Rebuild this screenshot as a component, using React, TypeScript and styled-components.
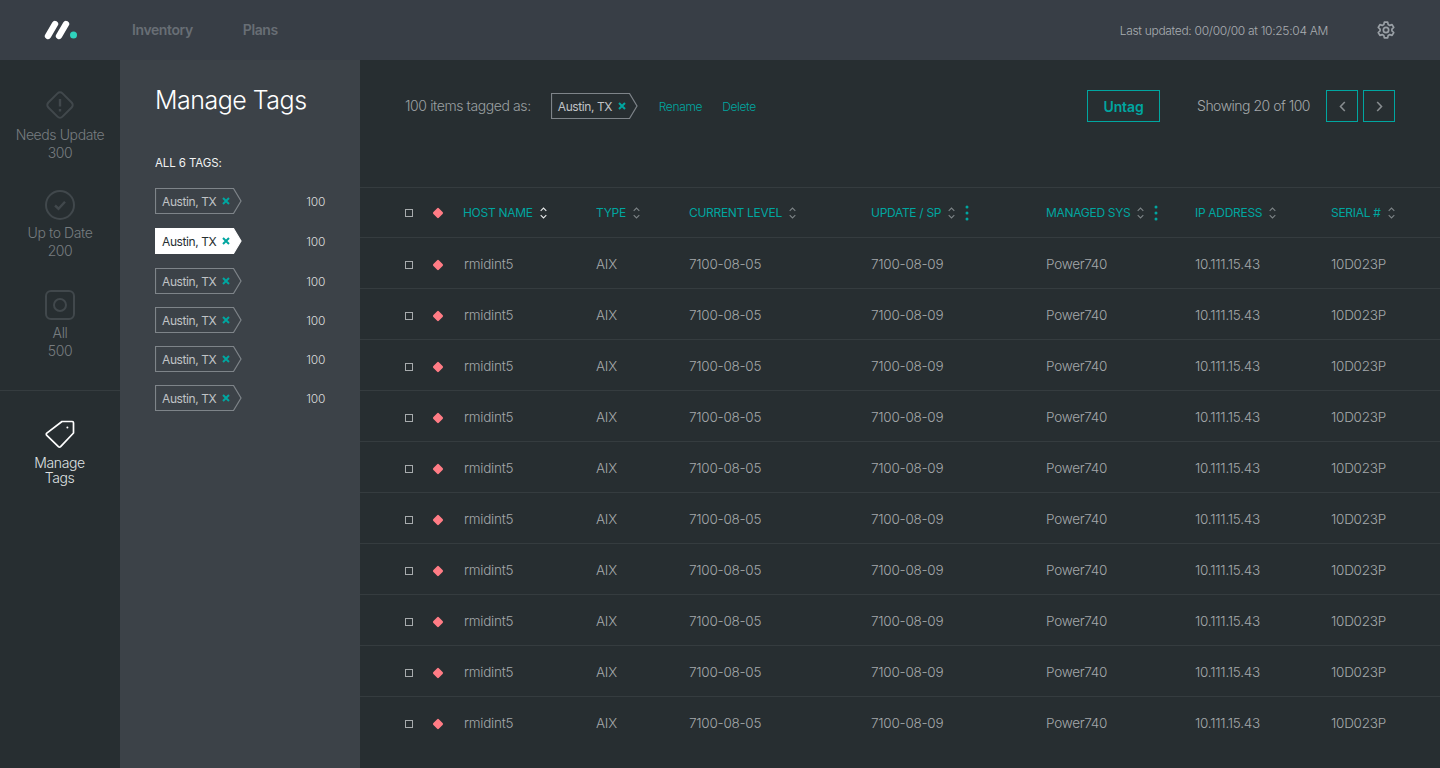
import React from "react";
import styled, { createGlobalStyle } from "styled-components";

const teal = "#00a6a0";

const GlobalStyle = createGlobalStyle`
  html, body {
    margin: 0;
    padding: 0;
    background: #272e31;
  }
  body {
    font-family: Inter, "Liberation Sans", sans-serif;
    font-weight: 300;
    letter-spacing: -0.3px;
    -webkit-font-smoothing: antialiased;
  }
  * {
    box-sizing: border-box;
  }
`;

const columns = [
  { label: "HOST NAME", active: true },
  { label: "TYPE" },
  { label: "CURRENT LEVEL" },
  { label: "UPDATE / SP", more: true },
  { label: "MANAGED SYS", more: true },
  { label: "IP ADDRESS" },
  { label: "SERIAL #" },
];

const tags = [false, true, false, false, false, false];
const rows = Array.from({ length: 10 }, (_, i) => i);

const Logo = () => (
  <svg width="34" height="22" viewBox="0 0 34 22">
    <path d="M4 17 L11 5 M15 17 L22 5" stroke="#fff" strokeWidth="6.4" strokeLinecap="round" fill="none" />
    <circle cx="29.5" cy="16" r="3.5" fill="#2fd3bd" />
  </svg>
);

const Gear = () => (
  <svg width="20" height="20" viewBox="0 0 24 24" fill="none" stroke="#9aa0a6" strokeWidth="2" strokeLinejoin="round">
    <path d="M10 2.5h4l.6 2.9 1.9 1.1 2.8-.9 2 3.4-2.2 2v2l2.2 2-2 3.4-2.8-.9-1.9 1.1-.6 2.9h-4l-.6-2.9-1.9-1.1-2.8.9-2-3.4 2.2-2v-2l-2.2-2 2-3.4 2.8.9 1.9-1.1z" />
    <circle cx="12" cy="12" r="3.2" />
  </svg>
);

const UpdateIcon = () => (
  <svg width="32" height="32" viewBox="0 0 32 32" fill="none" stroke="#41484c" strokeWidth="2">
    <rect x="6" y="6" width="20" height="20" rx="3.5" transform="rotate(45 16 16)" />
    <path d="M16 10v7.5M16 20v2.4" strokeWidth="2.4" />
  </svg>
);

const CheckIcon = () => (
  <svg width="32" height="32" viewBox="0 0 32 32" fill="none" stroke="#41484c" strokeWidth="2">
    <circle cx="16" cy="16" r="14" />
    <path d="M11 16.5l3.5 3.2 6.5-7" strokeWidth="2.4" />
  </svg>
);

const AllIcon = () => (
  <svg width="32" height="32" viewBox="0 0 32 32" fill="none" stroke="#41484c" strokeWidth="2">
    <rect x="2" y="2" width="28" height="28" rx="5" />
    <circle cx="16" cy="16" r="6" />
  </svg>
);

const TagIcon = () => (
  <svg width="32" height="32" viewBox="0 0 32 32" fill="none" stroke="#fff" strokeWidth="1.7" strokeLinejoin="round">
    <path d="M18 2.5h10.2c.8 0 1.3.5 1.3 1.3V14L16.6 27.6c-.7.7-1.5.7-2.2 0L2.8 16.4c-.7-.7-.7-1.5 0-2.2z" />
    <circle cx="23.4" cy="8.4" r="1" fill="#fff" stroke="none" />
  </svg>
);

const Sort = ({ active }: { active?: boolean }) => (
  <svg width="7" height="12" viewBox="0 0 7 12" fill="none" stroke={active ? "#e8eaeb" : "#7c8386"} strokeWidth="1.1">
    <path d="M0.7 3.8 L3.5 1 L6.3 3.8 M0.7 8.2 L3.5 11 L6.3 8.2" />
  </svg>
);

const Dots = () => (
  <svg width="4" height="16" viewBox="0 0 4 16" fill={teal}>
    <circle cx="2" cy="2" r="1.5" />
    <circle cx="2" cy="8" r="1.5" />
    <circle cx="2" cy="14" r="1.5" />
  </svg>
);

const CrossSvg = styled.svg`
  position: relative;
  flex: none;
`;

const Cross = () => (
  <CrossSvg width="8" height="8" viewBox="0 0 8 8" stroke={teal} strokeWidth="2" fill="none">
    <path d="M1 1l6 6M7 1l-6 6" />
  </CrossSvg>
);

const Chevron = ({ left }: { left?: boolean }) => (
  <svg width="7" height="11" viewBox="0 0 7 11" fill="none" stroke="#878c8f" strokeWidth="1.6">
    <path d={left ? "M5.8 1 L1.5 5.5 L5.8 10" : "M1.2 1 L5.5 5.5 L1.2 10"} />
  </svg>
);

const Tag = ({ selected }: { selected?: boolean }) => (
  <TagBox>
    <TagShape viewBox="0 0 87 26" preserveAspectRatio="none">
      <path
        d="M0.5 0.5 H78.5 L86 13 L78.5 25.5 H0.5 Z"
        fill={selected ? "#fff" : "none"}
        stroke={selected ? "#fff" : "#7e8489"}
        strokeWidth="1.2"
      />
    </TagShape>
    <TagText $selected={selected}>Austin, TX</TagText>
    <Cross />
  </TagBox>
);

export default function App() {
  return (
    <Page>
      <GlobalStyle />
      <TopBar>
        <LogoSlot>
          <Logo />
        </LogoSlot>
        <NavLink $first>Inventory</NavLink>
        <NavLink>Plans</NavLink>
        <Updated>Last updated: 00/00/00 at 10:25:04 AM</Updated>
        <GearSlot>
          <Gear />
        </GearSlot>
      </TopBar>
      <Body>
        <Sidebar>
          <SideItem>
            <UpdateIcon />
            <SideLabel $gap={5}>
              Needs Update
              <br />
              300
            </SideLabel>
          </SideItem>
          <SideItem>
            <CheckIcon />
            <SideLabel $gap={3}>
              Up to Date
              <br />
              200
            </SideLabel>
          </SideItem>
          <SideItem>
            <AllIcon />
            <SideLabel $gap={3}>
              All
              <br />
              500
            </SideLabel>
          </SideItem>
          <SideDivider />
          <SideActive>
            <TagIcon />
            <ActiveLabel>
              Manage
              <br />
              Tags
            </ActiveLabel>
          </SideActive>
        </Sidebar>
        <TagPanel>
          <PanelTitle>Manage Tags</PanelTitle>
          <PanelSub>ALL 6 TAGS:</PanelSub>
          <TagList>
            {tags.map((selected, i) => (
              <TagRow key={i} $wide={i < 2}>
                <Tag selected={selected} />
                <TagCount>100</TagCount>
              </TagRow>
            ))}
          </TagList>
        </TagPanel>
        <Main>
          <Toolbar>
            <ToolText>100 items tagged as:</ToolText>
            <Tag />
            <ToolLink>Rename</ToolLink>
            <ToolLink>Delete</ToolLink>
            <UntagButton>Untag</UntagButton>
            <Showing>Showing 20 of 100</Showing>
            <PageButton>
              <Chevron left />
            </PageButton>
            <PageButton>
              <Chevron />
            </PageButton>
          </Toolbar>
          <Table>
            <HeadRow>
              <Checkbox />
              <Diamond />
              {columns.map((c) => (
                <HeadCell key={c.label}>
                  <span>{c.label}</span>
                  <Sort active={c.active} />
                  {c.more && <Dots />}
                </HeadCell>
              ))}
            </HeadRow>
            {rows.map((r) => (
              <DataRow key={r} $last={r === rows.length - 1}>
                <Checkbox />
                <Diamond />
                <HostCell>rmidint5</HostCell>
                <Cell>AIX</Cell>
                <Cell>7100-08-05</Cell>
                <Cell>7100-08-09</Cell>
                <Cell>Power740</Cell>
                <Cell>10.111.15.43</Cell>
                <Cell>10D023P</Cell>
              </DataRow>
            ))}
          </Table>
        </Main>
      </Body>
    </Page>
  );
}

const Page = styled.div`
  width: 1440px;
  height: 768px;
  overflow: hidden;
  display: flex;
  flex-direction: column;
`;

const TopBar = styled.header`
  height: 60px;
  flex: none;
  display: flex;
  align-items: center;
  background: #383e46;
`;

const LogoSlot = styled.div`
  width: 120px;
  display: flex;
  justify-content: center;
  padding-left: 1px;
`;

const NavLink = styled.a<{ $first?: boolean }>`
  margin: 0 0 2px ${(p) => (p.$first ? "12px" : "50px")};
  font-size: 14px;
  font-weight: 600;
  letter-spacing: -0.4px;
  color: #686e75;
`;

const Updated = styled.div`
  margin-left: auto;
  font-size: 12px;
  letter-spacing: -0.3px;
  color: #a9adb1;
`;

const GearSlot = styled.div`
  margin: 0 44px 0 48px;
  display: flex;
`;

const Body = styled.div`
  flex: 1;
  display: flex;
  min-height: 0;
`;

const Sidebar = styled.nav`
  width: 120px;
  flex: none;
  display: flex;
  flex-direction: column;
  align-items: center;
  padding-top: 29px;
  background: #272e31;
`;

const SideItem = styled.div`
  height: 100px;
  display: flex;
  flex-direction: column;
  align-items: center;
`;

const SideLabel = styled.div<{ $gap: number }>`
  margin-top: ${(p) => p.$gap}px;
  font-size: 14px;
  line-height: 18px;
  letter-spacing: -0.4px;
  text-align: center;
  color: #777d80;
  white-space: nowrap;
`;

const SideDivider = styled.div`
  align-self: stretch;
  height: 1px;
  margin-top: 1px;
  background: #353c3f;
`;

const SideActive = styled(SideItem)`
  margin-top: 28px;
  padding-right: 1px;
`;

const ActiveLabel = styled.div`
  margin-top: 4px;
  font-size: 14px;
  line-height: 15px;
  letter-spacing: -0.4px;
  text-align: center;
  color: #dfe1e2;
`;

const TagPanel = styled.aside`
  width: 240px;
  flex: none;
  padding: 24px 35px 0;
  background: #3c4248;
`;

const PanelTitle = styled.h1`
  margin: 0;
  font-size: 25px;
  line-height: 32px;
  font-weight: 300;
  letter-spacing: -0.5px;
  color: #fff;
  white-space: nowrap;
`;

const PanelSub = styled.div`
  margin-top: 40px;
  font-size: 11.5px;
  line-height: 14px;
  font-weight: 400;
  letter-spacing: -0.1px;
  color: #f2f3f3;
`;

const TagList = styled.div`
  margin-top: 18px;
  display: flex;
  flex-direction: column;
`;

const TagRow = styled.div<{ $wide: boolean }>`
  height: 26px;
  margin-bottom: ${(p) => (p.$wide ? "14px" : "13px")};
  display: flex;
  align-items: center;
  justify-content: space-between;
`;

const TagBox = styled.div`
  position: relative;
  width: 87px;
  height: 26px;
  flex: none;
  display: flex;
  align-items: center;
  gap: 5.5px;
  padding-left: 7px;
`;

const TagShape = styled.svg`
  position: absolute;
  inset: 0;
  width: 100%;
  height: 100%;
`;

const TagText = styled.span<{ $selected?: boolean }>`
  position: relative;
  font-size: 12px;
  font-weight: 400;
  letter-spacing: -0.4px;
  color: ${(p) => (p.$selected ? "#272e31" : "#c0c3c6")};
  white-space: nowrap;
`;

const TagCount = styled.span`
  font-size: 12px;
  color: #d8dadb;
`;

const Main = styled.main`
  flex: 1;
  min-width: 0;
  display: flex;
  flex-direction: column;
  background: #272e31;
`;

const Toolbar = styled.div`
  height: 128px;
  flex: none;
  display: flex;
  align-items: flex-start;
  padding: 30px 45px 0;
  border-bottom: 1px solid #353c3f;
  & > ${TagBox} {
    margin: 3px 21px 0 20px;
  }
`;

const ToolText = styled.span`
  font-size: 14px;
  line-height: 32px;
  letter-spacing: -0.4px;
  color: #9ba0a2;
`;

const ToolLink = styled.a`
  margin-right: 20px;
  font-size: 12px;
  line-height: 33px;
  letter-spacing: -0.35px;
  color: ${teal};
`;

const UntagButton = styled.button`
  margin-left: auto;
  width: 73px;
  height: 32px;
  padding: 0;
  background: none;
  border: 1px solid ${teal};
  border-radius: 0;
  font-family: inherit;
  font-size: 14px;
  font-weight: 600;
  letter-spacing: -0.1px;
  color: ${teal};
`;

const Showing = styled.span`
  margin: 0 16px 0 37px;
  font-size: 14px;
  line-height: 32px;
  letter-spacing: -0.5px;
  color: #a4a8aa;
`;

const PageButton = styled.button`
  width: 32px;
  height: 32px;
  padding: 0;
  display: flex;
  align-items: center;
  justify-content: center;
  background: none;
  border: 1px solid ${teal};
  border-radius: 0;
  & + & {
    margin-left: 5px;
  }
`;

const Table = styled.div`
  display: flex;
  flex-direction: column;
`;

const gridColumns = "28px 30px 133px 93px 182px 175px 149px 136px 1fr";

const HeadRow = styled.div`
  height: 50px;
  display: grid;
  grid-template-columns: ${gridColumns};
  align-items: center;
  padding-left: 45px;
  border-bottom: 1px solid #353c3f;
`;

const DataRow = styled(HeadRow)<{ $last?: boolean }>`
  height: 51px;
  padding-top: 2px;
  border-bottom-color: ${(p) => (p.$last ? "transparent" : "#353c3f")};
`;

const Checkbox = styled.span`
  width: 8px;
  height: 8px;
  margin-top: 1px;
  border: 1px solid #a7abad;
`;

const Diamond = styled.span`
  width: 8px;
  height: 8px;
  margin: 1px 0 0 1px;
  border-radius: 1.5px;
  background: #ff7c85;
  transform: rotate(45deg);
`;

const HeadCell = styled.div`
  display: flex;
  align-items: center;
  gap: 7px;
  font-size: 12px;
  font-weight: 400;
  letter-spacing: -0.3px;
  color: ${teal};
  white-space: nowrap;
  svg:last-child:not(:nth-child(2)) {
    margin-left: 3px;
  }
`;

const Cell = styled.div`
  font-size: 13.5px;
  letter-spacing: -0.25px;
  color: #a4a8aa;
  white-space: nowrap;
`;

const HostCell = styled(Cell)`
  padding-left: 1px;
`;
